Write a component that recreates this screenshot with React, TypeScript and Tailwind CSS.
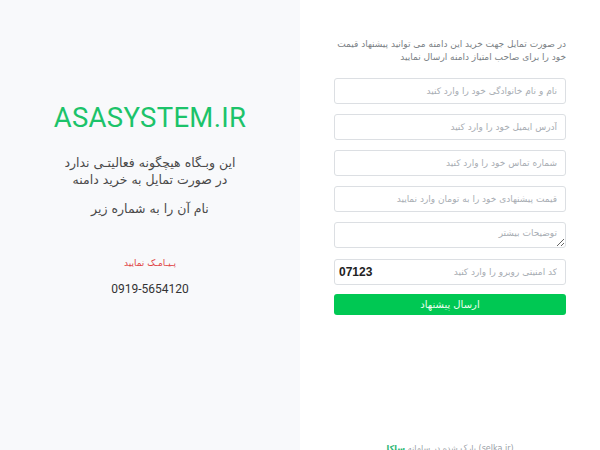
import React from "react";

const fa = { fontFamily: '"DejaVu Sans", "Noto Sans", sans-serif' };
const latin = { fontFamily: 'Roboto, "Open Sans", sans-serif' };

const inputCls =
  "w-full h-[26px] rounded-[3px] border border-[#dcdfe3] bg-white px-2 text-right text-[9px] placeholder:text-[#a8adb3] outline-none";

export default function App() {
  return (
    <div className="flex h-[450px] w-[600px] overflow-hidden bg-white">
      {/* Left panel */}
      <div className="flex w-[300px] flex-col items-center bg-[#f8f9fb] pt-[98px]">
        <h1 className="text-[27.5px] leading-[40px] tracking-[0.3px] text-[#1cc36a]" style={latin}>
          ASASYSTEM.IR
        </h1>
        <div dir="rtl" className="mt-[16px] text-center text-[12.5px] leading-[17px] text-[#4a4a4a]" style={fa}>
          <p>این وبـگاه هیچگونه فعالیتـی ندارد</p>
          <p>در صورت تمایل به خرید دامنه</p>
          <p className="mt-[12px]">نام آن را به شماره زیر</p>
        </div>
        <p dir="rtl" className="mt-[40px] text-[9px] text-[#e04545]" style={fa}>
          پـیـامـک نمایید
        </p>
        <p className="mt-[9px] text-[12px] text-[#333]" style={latin}>
          0919-5654120
        </p>
      </div>

      {/* Right panel */}
      <div className="relative flex flex-1 flex-col px-[34px] pt-[38px]">
        <p dir="rtl" className="whitespace-nowrap text-right text-[9px] leading-[13px] text-[#7a7f85]" style={fa}>
          در صورت تمایل جهت خرید این دامنه می توانید پیشنهاد قیمت
          <br />
          خود را برای صاحب امتیاز دامنه ارسال نمایید
        </p>
        <form className="mt-[14px] flex flex-col gap-[10px]" style={fa}>
          <input dir="rtl" className={inputCls} placeholder="نام و نام خانوادگی خود را وارد کنید" />
          <input dir="rtl" className={inputCls} placeholder="آدرس ایمیل خود را وارد کنید" />
          <input dir="rtl" className={inputCls} placeholder="شماره تماس خود را وارد کنید" />
          <input dir="rtl" className={inputCls} placeholder="قیمت پیشنهادی خود را به تومان وارد نمایید" />
          <textarea
            rows={1}
            className="h-[26px] w-full rounded-[3px] border border-[#dcdfe3] bg-white px-2 pt-[4px] text-right text-[9px] leading-[12px] placeholder:text-[#a8adb3] outline-none"
            placeholder="توضیحات بیشتر"
          />
          <div className="relative">
            <input dir="rtl" className={inputCls} placeholder="کد امنیتی روبرو را وارد کنید" />
            <span
              className="absolute left-[5px] top-[8px] text-[12px] font-bold leading-none text-[#222]"
              style={{ fontFamily: '"Liberation Sans", Arial, sans-serif' }}
            >
              07123
            </span>
          </div>
          <button
            type="button"
            dir="rtl"
            className="-mt-[1px] h-[21px] w-full rounded-[3px] bg-[#00c853] text-[10px] text-[#eafff0]"
          >
            ارسال پیشنهاد
          </button>
        </form>
        <div className="absolute bottom-[-5px] left-0 right-0 flex justify-center">
          <p dir="rtl" className="text-[8px] text-[#9aa0a6]" style={fa}>
            <span dir="ltr">(selka.ir)</span> پارک شده در سامانه{" "}
            <span className="font-bold text-[#2bb673]">سلکا</span>
          </p>
        </div>
      </div>
    </div>
  );
}
